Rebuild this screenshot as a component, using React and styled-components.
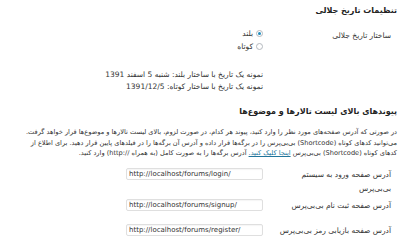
import React from "react";
import styled, { createGlobalStyle } from "styled-components";

const Global = createGlobalStyle`
  html, body { margin: 0; padding: 0; background: #fff; }
  body { font-family: "DejaVu Sans", "Noto Sans", sans-serif; color: #333; }
`;

const Wrap = styled.div`
  direction: rtl;
  width: 400px;
  height: 240px;
  overflow: hidden;
  box-sizing: border-box;
  padding: 4px 3px 0 0;
  font-size: 7.5px;
  line-height: 11px;
`;

const Heading = styled.h3`
  margin: ${(p) => p.$mt || 0}px 0 0 0;
  font-size: 8px;
  line-height: 14px;
  font-weight: bold;
  color: #222;
`;

const Row = styled.div`
  display: grid;
  grid-template-columns: 134px 1fr;
  margin-top: ${(p) => p.$mt || 0}px;
`;

const Th = styled.div`
  padding-right: 6px;
  padding-top: ${(p) => p.$pt || 0}px;
  color: #333;
  line-height: ${(p) => p.$lh || 11}px;
`;

const Td = styled.div`
  display: flex;
  flex-direction: column;
`;

const RadioLine = styled.label`
  display: flex;
  align-items: center;
  gap: 3px;
  height: 13px;
`;

const Radio = styled.span`
  width: 7px;
  height: 7px;
  border-radius: 50%;
  border: 1px solid #b4b9be;
  background: #fff;
  box-sizing: border-box;
  display: flex;
  align-items: center;
  justify-content: center;
  &::after {
    content: "";
    width: 3px;
    height: 3px;
    border-radius: 50%;
    background: ${(p) => (p.$checked ? "#1e8cbe" : "transparent")};
  }
`;

const Sample = styled.div`
  line-height: 12px;
`;

const Para = styled.p`
  margin: 8px 0 0 0;
  font-size: 6.6px;
  line-height: 10.5px;
  color: #333;
`;

const ParaLine = styled.span`
  display: block;
  white-space: nowrap;
`;

const Link = styled.a`
  color: #21759b;
  text-decoration: underline;
`;

const Input = styled.div`
  direction: ltr;
  width: 137px;
  height: 12px;
  box-sizing: border-box;
  border: 1px solid #dfdfdf;
  border-radius: 2px;
  background: #fff;
  font-family: "DejaVu Sans", sans-serif;
  font-size: 7px;
  line-height: 10px;
  padding-left: 2px;
  color: #333;
  box-shadow: inset 0 1px 1px rgba(0,0,0,0.04);
  white-space: nowrap;
  overflow: hidden;
`;

export default function App() {
  return (
    <>
      <Global />
      <Wrap>
        <Heading>تنظیمات تاریخ جلالی</Heading>
        <Row $mt={9}>
          <Th $pt={3}>ساختار تاریخ جلالی</Th>
          <Td>
            <RadioLine>
              <Radio $checked />
              بلند
            </RadioLine>
            <RadioLine>
              <Radio />
              کوتاه
            </RadioLine>
          </Td>
        </Row>
        <Row $mt={16}>
          <Th />
          <Td>
            <Sample>نمونه یک تاریخ با ساختار بلند: شنبه 5 اسفند 1391</Sample>
            <Sample>نمونه یک تاریخ با ساختار کوتاه: 1391/12/5</Sample>
          </Td>
        </Row>
        <Heading $mt={12}>پیوندهای بالای لیست تالارها و موضوع‌ها</Heading>
        <Para>
          <ParaLine>
            در صورتی که آدرس صفحه‌های مورد نظر را وارد کنید، پیوند هر کدام، در صورت لزوم، بالای لیست تالارها و موضوع‌ها قرار خواهد گرفت.
          </ParaLine>
          <ParaLine>
            می‌توانید کدهای کوتاه (Shortcode) بی‌بی‌پرس را در برگه‌ها قرار داده و آدرس آن برگه‌ها را در فیلدهای پایین قرار دهید. برای اطلاع از
          </ParaLine>
          <ParaLine>
            کدهای کوتاه (Shortcode) بی‌بی‌پرس <Link href="#">اینجا کلیک کنید.</Link> آدرس برگه‌ها را به صورت کامل (به همراه //:http) وارد کنید.
          </ParaLine>
        </Para>
        <Row $mt={9}>
          <Th $lh={14}>
            آدرس صفحه ورود به سیستم
            <br />
            بی‌بی‌پرس
          </Th>
          <Td>
            <Input>http://localhost/forums/login/</Input>
          </Td>
        </Row>
        <Row $mt={3}>
          <Th $pt={1}>آدرس صفحه ثبت نام بی‌بی‌پرس</Th>
          <Td>
            <Input>http://localhost/forums/signup/</Input>
          </Td>
        </Row>
        <Row $mt={13}>
          <Th $pt={1}>آدرس صفحه بازیابی رمز بی‌بی‌پرس</Th>
          <Td>
            <Input>http://localhost/forums/register/</Input>
          </Td>
        </Row>
      </Wrap>
    </>
  );
}
